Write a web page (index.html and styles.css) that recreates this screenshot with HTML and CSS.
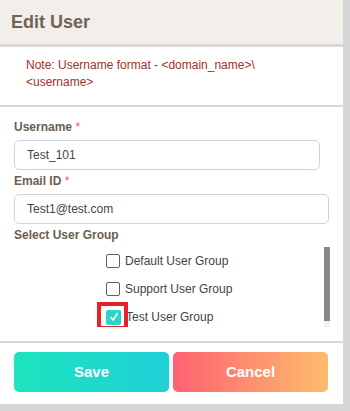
FILE: index.html
```html
<!DOCTYPE html>
<html>
<head>
    <meta http-equiv="Content-Type" content="text/html; charset=utf-8" />
    <title>Edit User</title>
    <link rel="stylesheet" href="styles.css">
</head>
<body>
<div class="modal">
    <div class="modal-head">Edit User</div>
    <div class="note">
        Note: Username format - &lt;domain_name&gt;\<br>&lt;username&gt;
    </div>
    <div class="modal-body">
        <label class="lbl">Username <span class="req">*</span></label>
        <input type="text" class="ipt ipt-user" value="Test_101">
        <label class="lbl">Email ID <span class="req">*</span></label>
        <input type="text" class="ipt ipt-mail" value="Test1@test.com">
        <label class="lbl">Select User Group</label>
        <div class="group-box">
            <div class="group-list">
                <div class="group-item">
                    <span class="chk"></span>
                    <span class="gname">Default User Group</span>
                </div>
                <div class="group-item">
                    <span class="chk"></span>
                    <span class="gname">Support User Group</span>
                </div>
                <div class="group-item">
                    <span class="chk on">
                        <svg viewBox="0 0 14 14" width="14" height="14"><path d="M4 7.6 L6.2 10 L10.2 3.6" fill="none" stroke="#fff" stroke-width="1.6" stroke-linecap="round" stroke-linejoin="round"/></svg>
                        <i class="mark"></i>
                    </span>
                    <span class="gname">Test User Group</span>
                </div>
            </div>
            <div class="scroll-track"><div class="scroll-thumb"></div></div>
        </div>
    </div>
    <div class="modal-foot">
        <a href="javascript:;" class="btn btn-save">Save</a>
        <a href="javascript:;" class="btn btn-cancel">Cancel</a>
    </div>
</div>
</body>
</html>
```

FILE: styles.css
```css
@charset "utf-8";
html,body,div,p,label,input{padding:0; margin:0; border:0;}
:focus {outline:none;}
html,body{width:100%;height:100%;}
body{
    background-color:#d6d6d6;
    font-family:'Liberation Sans', Arial, sans-serif;
    font-size:12px;
}
.modal{
    width:343px;
    background-color:#fff;
}
.modal-head{
    height:44px;
    display:flex;
    align-items:center;
    padding:0 11px;
    background-color:#f2efea;
    border-bottom:3px solid #d8d8d8;
    font-size:18px;
    font-weight:bold;
    color:#716359;
}
.note{
    height:34px;
    padding:10px 26px 14px;
    line-height:17px;
    color:#a3302c;
    border-bottom:2px solid #d8d8d8;
}
.modal-body{
    display:flex;
    flex-direction:column;
    align-items:flex-start;
    padding:13px 0 14px 14px;
}
.lbl{
    display:block;
    line-height:14px;
    font-weight:bold;
    color:#6b5d52;
    margin-top:4px;
}
.lbl:first-child{ margin-top:0; }
.req{ color:#ff4d78; font-weight:normal; }
.ipt{
    box-sizing:border-box;
    height:30px;
    margin-top:6px;
    padding:0 12px;
    border:1px solid #cfd4dc;
    border-radius:5px;
    font-family:'Liberation Sans', Arial, sans-serif;
    font-size:12px;
    color:#444;
}
.ipt-user{ width:306px; }
.ipt-mail{ width:315px; }
.group-box{
    display:flex;
    width:316px;
    height:80px;
    margin-top:5px;
    overflow:hidden;
}
.group-list{
    flex:1;
    padding-left:92px;
}
.scroll-track{
    width:6px;
    height:80px;
    background-color:#f1f1f1;
}
.scroll-thumb{
    height:74px;
    background-color:#888;
}
.group-item{
    height:28px;
    display:flex;
    align-items:center;
}
.chk{
    position:relative;
    box-sizing:border-box;
    width:14px;
    height:14px;
    border:1.5px solid #6b5d52;
    border-radius:2px;
    flex-shrink:0;
}
.chk.on{
    width:15px;
    height:15px;
    border:0;
    background-color:#2cd5c8;
}
.chk svg{ display:block; margin:0.5px; }
.chk .mark{
    position:absolute;
    left:-9px;
    top:-8px;
    width:23px;
    height:20px;
    border:4px solid #e8202a;
}
.gname{
    margin-left:5px;
    color:#444;
}
.modal-foot{
    display:flex;
    gap:4px;
    padding:9px 0 12px 14px;
    border-top:2px solid #d8d8d8;
}
.btn{
    display:block;
    width:155px;
    height:40px;
    line-height:40px;
    border-radius:5px;
    text-align:center;
    text-decoration:none;
    color:#fff;
    font-size:15px;
    font-weight:bold;
}
.btn-save{ background:linear-gradient(to right,#1ee3bd,#1dd0d6); }
.btn-cancel{ background:linear-gradient(to right,#ff6172,#fdbd6c); }
```
